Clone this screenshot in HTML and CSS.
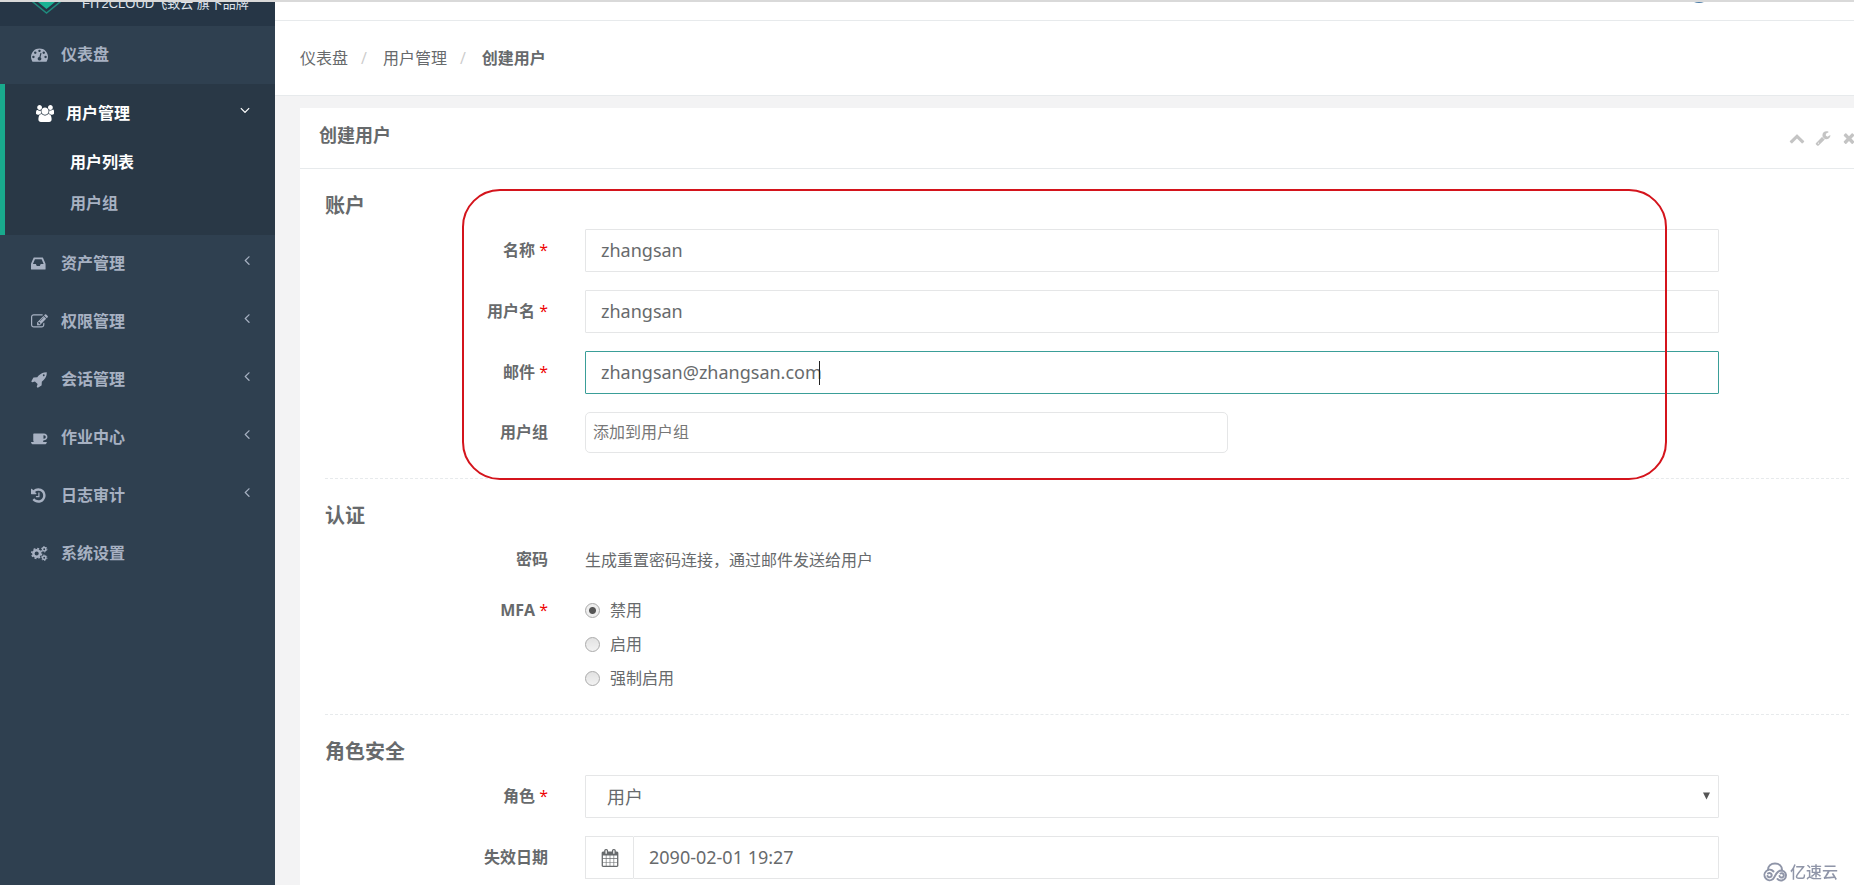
FILE: index.html
```html
<!DOCTYPE html>
<html lang="zh-CN">
<head>
<meta charset="utf-8">
<title>创建用户</title>
<link rel="stylesheet" href="styles.css">
</head>
<body>
<svg class="sprite" aria-hidden="true">
  <symbol id="i-dash" viewBox="0 0 1792 1792"><path d="M384 1152q0-53-37.500-90.500t-90.500-37.500-90.500 37.500-37.500 90.500 37.500 90.500 90.500 37.500 90.500-37.500 37.500-90.500zm192-448q0-53-37.500-90.500t-90.500-37.500-90.500 37.500-37.500 90.500 37.500 90.500 90.500 37.500 90.500-37.500 37.500-90.500zm428 481l101-382q6-26-7.500-48.500t-38.500-29.500-48 6.500-30 39.500l-101 382q-60 5-107 43.500t-63 98.500q-20 77 20 146t117 89 146-20 89-117q16-60-6-117t-72-91zm660-33q0-53-37.500-90.500t-90.500-37.500-90.500 37.500-37.500 90.500 37.500 90.500 90.500 37.500 90.500-37.500 37.500-90.500zm-640-640q0-53-37.500-90.500t-90.500-37.500-90.500 37.500-37.500 90.500 37.500 90.500 90.500 37.500 90.500-37.500 37.500-90.500zm448 192q0-53-37.500-90.500t-90.500-37.500-90.500 37.500-37.500 90.500 37.500 90.500 90.500 37.500 90.500-37.500 37.500-90.500zm320 448q0 261-141 483-19 29-54 29h-1402q-35 0-54-29-141-221-141-483 0-182 71-348t191-286 286-191 348-71 348 71 286 191 191 286 71 348z"/></symbol>
  <symbol id="i-users" viewBox="0 0 1920 1792"><path d="M593 896q-162 5-265 128h-134q-82 0-138-40.500t-56-118.500q0-353 124-353 6 0 43.500 21t97.500 42.500 119 21.500q67 0 133-23-5 37-5 66 0 159 97 290zm1071 637q0 120-73 189.500t-194 69.500h-874q-121 0-194-69.500t-73-189.500q0-53 3.500-103.500t14-109 26.500-108.500 43-97.500 62-81 85.500-53.500 111.500-20q10 0 43 21.500t73 48 107 48 135 21.500 135-21.500 107-48 73-48 43-21.500q61 0 111.500 20t85.500 53.500 62 81 43 97.500 26.500 108.500 14 109 3.500 103.500zm-1024-1277q0 106-75 181t-181 75-181-75-75-181 75-181 181-75 181 75 75 181zm704 384q0 159-112.500 271.500t-271.500 112.500-271.500-112.500-112.500-271.500 112.500-271.500 271.500-112.500 271.500 112.500 112.500 271.500zm576 225q0 78-56 118.500t-138 40.500h-134q-103-123-265-128 97-131 97-290 0-29-5-66 66 23 133 23 59 0 119-21.500t97.500-42.500 43.500-21q124 0 124 353zm-128-609q0 106-75 181t-181 75-181-75-75-181 75-181 181-75 181 75 75 181z"/></symbol>
  <symbol id="i-inbox" viewBox="128 0 1792 1792"><path d="M1151 960h316q-1-3-2.500-8t-2.500-8l-212-496h-708l-212 496q-1 2-2.500 8t-2.500 8h316l95 192h320zm513 30v482q0 26-19 45t-45 19h-1408q-26 0-45-19t-19-45v-482q0-62 25-123l238-552q10-25 36.500-42t52.500-17h832q26 0 52.500 17t36.500 42l238 552q25 61 25 123z"/></symbol>
  <symbol id="i-edit" viewBox="0 0 1792 1792"><path d="M888 1184l116-116-152-152-116 116v56h96v96h56zm440-720q-16-16-33 1l-350 350q-17 17-1 33t33-1l350-350q17-17 1-33zm80 594v190q0 119-84.500 203.500t-203.500 84.500h-832q-119 0-203.500-84.500t-84.500-203.500v-832q0-119 84.500-203.500t203.500-84.500h832q63 0 117 25 15 7 18 23 3 17-9 29l-49 49q-14 14-32 8-23-6-45-6h-832q-66 0-113 47t-47 113v832q0 66 47 113t113 47h832q66 0 113-47t47-113v-126q0-13 9-22l64-64q15-15 35-7t20 29zm-96-738l288 288-672 672h-288v-288zm444 132l-92 92-288-288 92-92q28-28 68-28t68 28l152 152q28 28 28 68t-28 68z"/></symbol>
  <symbol id="i-rocket" viewBox="0 0 1792 1792"><path d="M1440 448q0-40-28-68t-68-28-68 28-28 68 28 68 68 28 68-28 28-68zm224-288q0 249-75.500 430.500t-253.500 360.500q-81 80-195 176l-20 379q-2 16-16 26l-384 224q-7 4-16 4-12 0-23-9l-64-64q-13-14-8-32l85-276-281-281-276 85q-3 1-9 1-14 0-23-9l-64-64q-17-19-5-39l224-384q10-14 26-16l379-20q96-114 176-195 188-187 358-258t431-71q14 0 24 9.500t10 22.500z"/></symbol>
  <symbol id="i-coffee" viewBox="0 0 1920 1792"><path d="M1664 832q0-80-56-136t-136-56h-64v384h64q80 0 136-56t56-136zm-1664 576h1792q0 106-75 181t-181 75h-1280q-106 0-181-75t-75-181zm1856-576q0 159-112.500 271.500t-271.500 112.500h-64v32q0 92-66 158t-158 66h-704q-92 0-158-66t-66-158v-736q0-26 19-45t45-19h1152q159 0 271.500 112.500t112.500 271.500z"/></symbol>
  <symbol id="i-history" viewBox="128 0 1792 1792"><path d="M1664 896q0 156-61 298t-164 245-245 164-298 61q-172 0-327-72.500t-264-204.500q-7-10-6.500-22.500t8.500-20.500l137-138q10-9 25-9 16 2 23 12 73 95 179 147t225 52q104 0 198.500-40.500t163.500-109.500 109.500-163.500 40.500-198.500-40.500-198.500-109.500-163.500-163.500-109.500-198.500-40.500q-98 0-188 35.500t-160 101.500l137 138q31 30 14 69-17 40-59 40h-448q-26 0-45-19t-19-45v-448q0-42 40-59 39-17 69 14l130 129q107-101 244.500-156.500t284.500-55.500q156 0 298 61t245 164 164 245 61 298zm-640-288v448q0 14-9 23t-23 9h-320q-14 0-23-9t-9-23v-64q0-14 9-23t23-9h224v-352q0-14 9-23t23-9h64q14 0 23 9t9 23z"/></symbol>
  <symbol id="i-cogs" viewBox="0 0 18 17"><g fill="none" stroke="currentColor"><circle cx="6" cy="8.500" r="3.500" stroke-width="2.600"/><circle cx="6" cy="8.500" r="5.200" stroke-width="1.600" stroke-dasharray="2.040 2.040"/><circle cx="14" cy="4" r="1.800" stroke-width="1.600"/><circle cx="14" cy="4" r="2.900" stroke-width="1" stroke-dasharray="1.520 1.520"/><circle cx="14" cy="13" r="1.800" stroke-width="1.600"/><circle cx="14" cy="13" r="2.900" stroke-width="1" stroke-dasharray="1.520 1.520"/></g></symbol>
  <symbol id="i-left" viewBox="0 0 1792 1792"><path d="M1203 544q0 13-10 23l-393 393 393 393q10 10 10 23t-10 23l-50 50q-10 10-23 10t-23-10l-466-466q-10-10-10-23t10-23l466-466q10-10 23-10t23 10l50 50q10 10 10 23z"/></symbol>
  <symbol id="i-down" viewBox="0 0 1792 1792"><path d="M1395 736q0 13-10 23l-466 466q-10 10-23 10t-23-10l-466-466q-10-10-10-23t10-23l50-50q10-10 23-10t23 10l393 393 393-393q10-10 23-10t23 10l50 50q10 10 10 23z"/></symbol>
  <symbol id="i-up" viewBox="0 0 1792 1792"><path d="M1683 1331l-166 165q-19 19-45 19t-45-19l-531-531-531 531q-19 19-45 19t-45-19l-166-165q-19-19-19-45.500t19-45.500l742-741q19-19 45-19t45 19l742 741q19 19 19 45.500t-19 45.500z"/></symbol>
  <symbol id="i-wrench" viewBox="0 0 1792 1792"><path d="M448 1472q0-26-19-45t-45-19-45 19-19 45 19 45 45 19 45-19 19-45zm644-420l-682 682q-37 37-90 37-52 0-91-37l-106-108q-38-36-38-90 0-53 38-91l681-681q39 98 114.500 173.500t173.500 114.500zm634-435q0 39-23 106-47 134-164.500 217.500t-258.500 83.500q-185 0-316.500-131.500t-131.500-316.500 131.500-316.500 316.500-131.500q58 0 121.500 16.500t107.500 46.500q16 11 16 28t-16 28l-293 169v224l193 107q5-3 79-48.500t135.500-81 70.500-35.500q15 0 23.500 10t8.500 25z"/></symbol>
  <symbol id="i-times" viewBox="0 0 1792 1792"><path d="M1490 1322q0 40-28 68l-136 136q-28 28-68 28t-68-28l-294-294-294 294q-28 28-68 28t-68-28l-136-136q-28-28-28-68t28-68l294-294-294-294q-28-28-28-68t28-68l136-136q28-28 68-28t68 28l294 294 294-294q28-28 68-28t68 28l136 136q28 28 28 68t-28 68l-294 294 294 294q28 28 28 68z"/></symbol>
  <symbol id="i-cal" viewBox="0 0 1792 1792"><path d="M192 1664h288v-288h-288v288zm352 0h320v-288h-320v288zm-352-352h288v-320h-288v320zm352 0h320v-320h-320v320zm-352-384h288v-288h-288v288zm736 736h320v-288h-320v288zm-384-736h320v-288h-320v288zm768 736h288v-288h-288v288zm-384-352h320v-320h-320v320zm-352-864v-288q0-13-9.500-22.500t-22.500-9.500h-64q-13 0-22.500 9.500t-9.500 22.500v288q0 13 9.500 22.500t22.500 9.500h64q13 0 22.500-9.500t9.500-22.500zm736 864h288v-320h-288v320zm-384-384h320v-288h-320v288zm384 0h288v-288h-288v288zm32-480v-288q0-13-9.500-22.500t-22.500-9.500h-64q-13 0-22.500 9.500t-9.500 22.500v288q0 13 9.500 22.500t22.500 9.500h64q13 0 22.500-9.500t9.500-22.500zm384-64v1280q0 52-38 90t-90 38h-1408q-52 0-90-38t-38-90v-1280q0-52 38-90t90-38h128v-96q0-66 47-113t113-47h64q66 0 113 47t47 113v96h384v-96q0-66 47-113t113-47h64q66 0 113 47t47 113v96h128q52 0 90 38t38 90z"/></symbol>
</svg>

<div class="app">
  <aside class="sidebar">
    <div class="brand">
      <svg class="brand-mark" viewBox="0 0 32 32"><path d="M0 18l16 13 16-13" fill="none" stroke="#1f8a7d" stroke-width="1.500"/><path d="M5 0h22v18l-11 9-11-9z" fill="#1ab394"/></svg>
      <span class="brand-text">FIT2CLOUD飞致云 旗下品牌</span>
    </div>
    <nav>
      <ul class="menu">
        <li><a class="item" href="#"><svg class="icon"><use href="#i-dash"/></svg>仪表盘</a></li>
        <li class="active">
          <a class="item" href="#"><svg class="icon icon-wide"><use href="#i-users"/></svg>用户管理<svg class="arrow"><use href="#i-down"/></svg></a>
          <ul class="submenu">
            <li><a class="current" href="#">用户列表</a></li>
            <li><a href="#">用户组</a></li>
          </ul>
        </li>
        <li><a class="item" href="#"><svg class="icon"><use href="#i-inbox"/></svg>资产管理<svg class="arrow"><use href="#i-left"/></svg></a></li>
        <li><a class="item" href="#"><svg class="icon"><use href="#i-edit"/></svg>权限管理<svg class="arrow"><use href="#i-left"/></svg></a></li>
        <li><a class="item" href="#"><svg class="icon"><use href="#i-rocket"/></svg>会话管理<svg class="arrow"><use href="#i-left"/></svg></a></li>
        <li><a class="item" href="#"><svg class="icon"><use href="#i-coffee"/></svg>作业中心<svg class="arrow"><use href="#i-left"/></svg></a></li>
        <li><a class="item" href="#"><svg class="icon"><use href="#i-history"/></svg>日志审计<svg class="arrow"><use href="#i-left"/></svg></a></li>
        <li><a class="item" href="#"><svg class="icon"><use href="#i-cogs"/></svg>系统设置</a></li>
      </ul>
    </nav>
  </aside>

  <main class="main">
    <div class="topbar"><span class="avatar"></span></div>
    <ol class="breadcrumb">
      <li><a href="#">仪表盘</a></li>
      <li><a href="#">用户管理</a></li>
      <li><strong>创建用户</strong></li>
    </ol>
    <section class="card">
      <header class="card-head">
        <h5>创建用户</h5>
        <div class="tools">
          <button type="button" aria-label="收起"><svg><use href="#i-up"/></svg></button>
          <button type="button" aria-label="设置"><svg><use href="#i-wrench"/></svg></button>
          <button type="button" aria-label="关闭"><svg><use href="#i-times"/></svg></button>
        </div>
      </header>
      <form class="card-body">
        <div class="highlight"></div>
        <h3>账户</h3>
        <div class="rows">
          <div class="row"><label class="label" for="name">名称 <i>*</i></label><input class="control" id="name" type="text" value="zhangsan"></div>
          <div class="row"><label class="label" for="username">用户名 <i>*</i></label><input class="control" id="username" type="text" value="zhangsan"></div>
          <div class="row"><label class="label" for="email">邮件 <i>*</i></label><div class="field"><input class="control focused" id="email" type="text" value="zhangsan@zhangsan.com"><span class="caret"></span></div></div>
          <div class="row"><label class="label" for="groups">用户组</label><input class="control picker" id="groups" type="text" placeholder="添加到用户组"></div>
        </div>
        <hr>
        <h3>认证</h3>
        <div class="rows">
          <div class="row"><span class="label">密码</span><p class="static">生成重置密码连接，通过邮件发送给用户</p></div>
          <div class="row row-top" role="radiogroup" aria-labelledby="mfa-label">
            <span class="label" id="mfa-label">MFA <i>*</i></span>
            <div class="radios">
              <label><input type="radio" name="mfa" checked>禁用</label>
              <label><input type="radio" name="mfa">启用</label>
              <label><input type="radio" name="mfa">强制启用</label>
            </div>
          </div>
        </div>
        <hr>
        <h3>角色安全</h3>
        <div class="rows">
          <div class="row"><label class="label" for="role">角色 <i>*</i></label><div class="field"><select class="control select" id="role"><option>用户</option></select><svg class="select-arrow" viewBox="0 0 8 8"><path d="M0 0h8l-4 8z"/></svg></div></div>
          <div class="row"><label class="label" for="expires">失效日期</label><div class="group"><span class="addon"><svg><use href="#i-cal"/></svg></span><input class="control" id="expires" type="text" value="2090-02-01 19:27"></div></div>
        </div>
      </form>
    </section>
  </main>
</div>
<div class="watermark">
  <svg viewBox="0 0 26 20"><path d="M6 8C6 4 9 1.500 13 1.500S20 4 20 8"/><path d="M11.500 9.500A5.200 5.200 0 1 0 11 17C13.500 14.500 14 8.500 19.500 8.500A5 5 0 1 1 15.500 17"/><path d="M6 11.500A2.200 2.200 0 1 1 5.500 14"/><path d="M18.500 11.500A2.200 2.200 0 1 1 17.500 14"/></svg>
  <span>亿速云</span>
</div>
</body>
</html>
```
FILE: styles.css
```css
* { box-sizing: border-box; }

body {
  margin: 0;
  height: 100vh;
  overflow: hidden;
  border-top: 2px solid #d9d9d9;
  background: #f3f3f4;
  color: #676a6c;
  font: 16px/24px "Open Sans", "Noto Sans CJK SC", sans-serif;
}

ul, ol { margin: 0; padding: 0; list-style: none; }
a { color: inherit; text-decoration: none; }
svg { fill: currentColor; }
.sprite { display: none; }

.app { display: flex; height: 100%; }

/* Sidebar */
.sidebar {
  flex: 0 0 275px;
  background: #2f4050;
  color: #a7b1c2;
  font-weight: 600;
}

.brand {
  display: flex;
  align-items: flex-end;
  gap: 19px;
  height: 24px;
  padding: 0 0 12px 30px;
  overflow: hidden;
  background: #263646;
}
.brand-mark { flex: none; width: 33px; height: 32px; }
.brand-text {
  color: #dfe4ed;
  font: 13px/20px "Liberation Sans", "Noto Sans CJK SC", sans-serif;
  white-space: nowrap;
}

.item {
  display: flex;
  align-items: center;
  height: 58px;
  padding: 0 20px 2px 31px;
}
.icon { width: 17px; height: 17px; margin-right: 13px; }
.icon-wide { width: 18px; margin-right: 12px; }
.arrow { width: 16px; height: 16px; margin: 0 0 6px auto; }

.active {
  padding-bottom: 11px;
  border-left: 5px solid #19aa8d;
  background: #293846;
}
.active .item { padding: 0 22px 0 31px; color: #fff; }
.submenu a { display: block; padding-left: 65px; line-height: 41px; }
.submenu .current { color: #fff; }

/* Main area */
.main {
  display: flex;
  flex: 1;
  flex-direction: column;
  min-width: 0;
  overflow: hidden;
}

.topbar {
  display: flex;
  flex: none;
  align-items: flex-end;
  justify-content: flex-end;
  height: 19px;
  padding: 0 143px 17px 0;
  overflow: hidden;
  border-bottom: 1px solid #e7eaec;
  background: #fff;
}
.avatar { flex: none; width: 24px; height: 24px; border-radius: 50%; background: #4a7ba6; }

.breadcrumb {
  display: flex;
  flex: none;
  height: 75px;
  padding: 25px;
  border-bottom: 1px solid #e7eaec;
  background: #fff;
}
.breadcrumb li + li::before { content: "/"; padding: 0 16px 0 13px; color: #ccc; }
.breadcrumb strong { font-weight: 600; }

.card { flex: 1; margin: 12px -20px 0 25px; background: #fff; }
.card-head {
  display: flex;
  align-items: center;
  justify-content: space-between;
  height: 61px;
  padding: 0 17px 6px 19px;
  border-bottom: 1px solid #e7eaec;
}
h5 { margin: 0; font-size: 18px; font-weight: 600; }
.tools { display: flex; gap: 10px; padding-top: 6px; color: #c4c4c4; }
.tools button { padding: 0; border: 0; background: none; color: inherit; }
.tools svg { display: block; width: 16px; height: 16px; }

.card-body { position: relative; padding: 25px 25px 0; }
.highlight {
  position: absolute;
  z-index: 1;
  top: 20px;
  left: 162px;
  right: 207px;
  height: 291px;
  border: 2px solid #d4141c;
  border-radius: 38px;
  pointer-events: none;
}
h3 { margin: 0 0 11px; font-size: 20px; line-height: 24px; font-weight: 600; }
hr { margin: 25px 0; border: 0; border-top: 1px dashed #e7eaec; }

/* Form */
.rows { display: flex; flex-direction: column; gap: 18px; }
.row {
  display: grid;
  grid-template-columns: 223px minmax(0, 1fr);
  column-gap: 37px;
  align-items: center;
  padding-right: 130px;
}
.row-top { align-items: start; }
.label { padding-bottom: 2px; font-weight: 700; text-align: right; }
.label i { color: #e00; font-style: normal; font-weight: 400; }
.row-top .label { line-height: 22px; }

.control {
  display: block;
  width: 100%;
  height: 43px;
  padding: 0 15px 2px;
  border: 1px solid #e5e6e7;
  border-radius: 1px;
  outline: 0;
  background: #fff;
  color: inherit;
  font: 18px/24px "Noto Sans", "Noto Sans CJK SC", sans-serif;
}
.focused { border-color: #3a9e98; }
.picker { width: 57%; max-width: 643px; height: 41px; padding: 0 7px 2px; border-radius: 5px; font-size: 16px; }
.picker::placeholder { color: #777; }
.field { position: relative; }
.caret { position: absolute; top: 10px; left: 234px; width: 1px; height: 24px; background: #222; }
.select { padding: 0 21px; appearance: none; }
.select-arrow { position: absolute; top: 17px; right: 9px; width: 7px; height: 8px; fill: #555; }
.static { margin: 0; line-height: 42px; }

.radios { display: grid; gap: 12px; }
.radios label { display: flex; align-items: center; gap: 10px; line-height: 22px; }
.radios input {
  width: 15px;
  height: 15px;
  margin: 0;
  border: 1px solid #aaa;
  border-radius: 50%;
  appearance: none;
  background: linear-gradient(#e2e2e2, #f2f2f2);
}
.radios input:checked { background: radial-gradient(circle, #555 3px, #eee 4px); }

.group { display: flex; }
.addon {
  display: flex;
  flex: 0 0 48px;
  align-items: center;
  justify-content: center;
  border: 1px solid #e5e6e7;
  border-right: 0;
}
.addon svg { width: 18px; height: 18px; }

.watermark {
  position: fixed;
  right: 16px;
  bottom: 1px;
  display: flex;
  align-items: center;
  gap: 2px;
  color: #8f95a8;
  font-weight: 500;
}
.watermark svg {
  width: 26px;
  height: 20px;
  fill: none;
  stroke: currentColor;
  stroke-width: 2;
  stroke-linecap: round;
}
```
